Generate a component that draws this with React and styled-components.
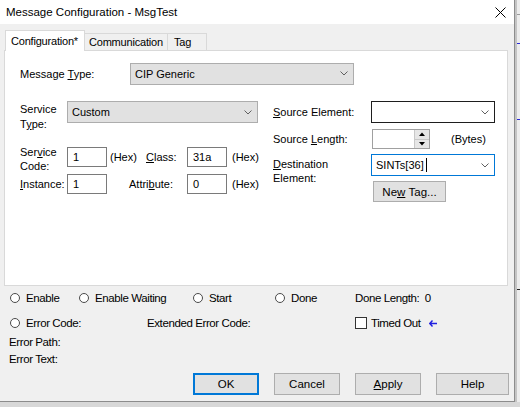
import React from 'react'
import styled, { createGlobalStyle } from 'styled-components'

const GlobalStyle = createGlobalStyle`
    * { box-sizing: border-box; }
    html, body { margin: 0; padding: 0; background: #fff; }
    body {
        font-family: "Liberation Sans", Arial, sans-serif;
        font-size: 11px;
        color: #000;
    }
`

const Screen = styled.div`
    width: 520px;
    height: 407px;
    overflow: hidden;
    display: flex;
    flex-direction: column;
    background: #d4d4d4;
`

const TopArea = styled.div`
    display: flex;
    height: 402px;
`

const Dialog = styled.div`
    width: 515px;
    display: flex;
    flex-direction: column;
    background: #f0f0f0;
    border-right: 1px solid #8c8c8c;
    border-bottom: 1px solid #8c8c8c;
`

const BehindStrip = styled.div`
    flex: 1;
    border-left: 2px solid #c4c4c4;
    background:
        linear-gradient(to bottom, transparent 43px, #2a2ad8 43px, #2a2ad8 44px, transparent 44px),
        linear-gradient(to bottom, transparent 119px, #2a2ad8 119px, #2a2ad8 120px, transparent 120px),
        linear-gradient(to bottom, transparent 289px, #222 289px, #222 290px, transparent 290px),
        linear-gradient(to bottom, transparent 14px, #9a9a9a 14px, #9a9a9a 15px, transparent 15px),
        #ececec;
`

const BottomStrip = styled.div`
    flex: 1;
    background: #d8d8d8;
`

const TitleBar = styled.div`
    height: 24px;
    background: #fff;
    display: flex;
    align-items: center;
    justify-content: space-between;
    padding-left: 6px;
    font-size: 11.5px;
`

const CloseButton = styled.div`
    width: 28px;
    height: 24px;
    display: flex;
    align-items: center;
    justify-content: center;
`

const Body = styled.div`
    flex: 1;
    padding: 7px 6px 0 4px;
    display: flex;
    flex-direction: column;
`

const Tabs = styled.div`
    display: flex;
    align-items: flex-end;
    height: 20px;
    padding-left: 1px;
    margin-bottom: -1px;
    position: relative;
    z-index: 1;
`

const Tab = styled.div`
    width: ${p => p.$w}px;
    height: ${p => (p.$active ? 21 : 18)}px;
    margin-left: ${p => (p.$first ? 0 : -1)}px;
    border: 1px solid #d9d9d9;
    border-bottom: ${p => (p.$active ? 'none' : '1px solid #d9d9d9')};
    background: ${p => (p.$active ? '#fff' : '#f0f0f0')};
    display: flex;
    align-items: center;
    padding-left: ${p => p.$pl}px;
    padding-bottom: ${p => (p.$active ? 1 : 0)}px;
    letter-spacing: -0.2px;
    white-space: nowrap;
`

const Panel = styled.div`
    width: 504px;
    height: 236px;
    border: 1px solid #d9d9d9;
    background: #fff;
    padding: 12px 0 0 15px;
`

const Row = styled.div`
    display: flex;
    align-items: center;
    height: ${p => p.$h || 20}px;
    margin-top: ${p => p.$mt || 0}px;
    margin-left: ${p => p.$ml || 0}px;
`

const Label = styled.span`
    width: ${p => (p.$w ? `${p.$w}px` : 'auto')};
    margin-left: ${p => p.$ml || 0}px;
    flex-shrink: 0;
    white-space: nowrap;
`

const TwoLineLabel = styled.div`
    width: ${p => p.$w}px;
    align-self: flex-start;
    margin-top: ${p => p.$mt || 0}px;
    line-height: ${p => p.$lh || 14}px;
    flex-shrink: 0;
`

const Combo = styled.div`
    width: ${p => p.$w}px;
    height: 22px;
    display: flex;
    align-items: center;
    justify-content: space-between;
    padding: 0 5px 0 4px;
    background: ${p => (p.$variant === 'disabled' ? '#e1e1e1' : '#fff')};
    border: 1px solid ${p =>
        p.$variant === 'disabled' ? '#adadad' : p.$variant === 'focus' ? '#0078d7' : '#1e1e1e'};
    flex-shrink: 0;
`

const Columns = styled.div`
    display: flex;
    margin-top: 17px;
`

const Column = styled.div`
    width: ${p => p.$w}px;
    margin-right: ${p => p.$mr || 0}px;
    display: flex;
    flex-direction: column;
`

const TextBox = styled.div`
    width: ${p => p.$w || 40}px;
    height: 20px;
    border: 1px solid #7a7a7a;
    background: #fff;
    padding-left: 5px;
    display: flex;
    align-items: center;
    flex-shrink: 0;
`

const SpinBox = styled.div`
    width: 58px;
    height: 20px;
    border: 1px solid #a0a0a0;
    background: #fff;
    display: flex;
    justify-content: flex-end;
    flex-shrink: 0;
`

const SpinButtons = styled.div`
    width: 15px;
    display: flex;
    flex-direction: column;
    border-left: 1px solid #c8c8c8;
`

const SpinButton = styled.div`
    flex: 1;
    background: #e6e6e6;
    display: flex;
    align-items: center;
    justify-content: center;
    border-bottom: ${p => (p.$top ? '1px solid #c8c8c8' : 'none')};
`

const Caret = styled.span`
    width: 1px;
    height: 14px;
    background: #000;
    margin-left: 2px;
`

const Button = styled.div`
    width: ${p => p.$w}px;
    height: ${p => p.$h || 22}px;
    margin-left: ${p => p.$ml || 0}px;
    margin-top: ${p => p.$mt || 0}px;
    background: #e1e1e1;
    border: ${p => (p.$default ? '2px solid #0078d7' : '1px solid #adadad')};
    display: flex;
    align-items: center;
    justify-content: center;
    flex-shrink: 0;
    font-size: 11.5px;
`

const StatusRow = styled.div`
    display: flex;
    align-items: center;
    height: 16px;
    margin-top: ${p => p.$mt || 0}px;
    margin-left: ${p => p.$ml || 6}px;
    font-size: 11.5px;
    letter-spacing: -0.4px;
`

const RadioItem = styled.div`
    width: ${p => (p.$w ? `${p.$w}px` : 'auto')};
    display: flex;
    align-items: center;
    gap: 6px;
    flex-shrink: 0;
`

const Radio = styled.span`
    width: 10px;
    height: 10px;
    border-radius: 50%;
    border: 1px solid #4a4a4a;
    background: #fff;
    flex-shrink: 0;
`

const CheckBox = styled.span`
    width: 12px;
    height: 12px;
    border: 1px solid #333;
    background: #fff;
    margin-right: 4px;
    flex-shrink: 0;
`

const ButtonBar = styled.div`
    display: flex;
    margin-top: 6px;
    margin-left: 189px;
    gap: 15px;
`

const Chevron = () => (
    <svg width="8" height="5" viewBox="0 0 8 5">
        <path d="M0.5 0.5 L4 4 L7.5 0.5" fill="none" stroke="#606060" strokeWidth="1" />
    </svg>
)

const Triangle = ({ up }) => (
    <svg width="6" height="4" viewBox="0 0 6 4">
        <path d={up ? 'M0 4 L3 0.5 L6 4 Z' : 'M0 0 L3 3.5 L6 0 Z'} fill="#000" />
    </svg>
)

const BackArrow = () => (
    <svg width="8" height="7" viewBox="0 0 8 7" style={{ marginLeft: 8 }}>
        <path d="M3.5 0.5 L0.8 3.5 L3.5 6.5 M1 3.5 L8 3.5" fill="none" stroke="#2020e0" strokeWidth="1.4" />
    </svg>
)

const App = () => {
    return (
        <Screen>
            <GlobalStyle />
            <TopArea>
                <Dialog>
                    <TitleBar>
                        <span>Message Configuration - MsgTest</span>
                        <CloseButton>
                            <svg width="11" height="11" viewBox="0 0 11 11">
                                <path d="M0.5 0.5 L10.5 10.5 M10.5 0.5 L0.5 10.5" stroke="#000" strokeWidth="1" />
                            </svg>
                        </CloseButton>
                    </TitleBar>
                    <Body>
                        <Tabs>
                            <Tab $active $first $w={80} $pl={5}>Configuration*</Tab>
                            <Tab $w={84} $pl={4}>Communication</Tab>
                            <Tab $w={40} $pl={6}>Tag</Tab>
                        </Tabs>
                        <Panel>
                            <Row $h={21}>
                                <Label $w={110}>Message <u>T</u>ype:</Label>
                                <Combo $w={224} $variant="disabled">
                                    <span>CIP Generic</span>
                                    <Chevron />
                                </Combo>
                            </Row>
                            <Columns>
                                <Column $w={238} $mr={15}>
                                    <Row $h={22}>
                                        <TwoLineLabel $w={47} $mt={1} $lh={15}>
                                            Service<br />T<u>y</u>pe:
                                        </TwoLineLabel>
                                        <Combo $w={191} $variant="disabled">
                                            <span>Custom</span>
                                            <Chevron />
                                        </Combo>
                                    </Row>
                                    <Row $mt={24}>
                                        <TwoLineLabel $w={47} $mt={-2}>
                                            Ser<u>v</u>ice<br />Code:
                                        </TwoLineLabel>
                                        <TextBox>1</TextBox>
                                        <Label $w={36} $ml={3}>(Hex)</Label>
                                        <Label $w={41}><u>C</u>lass:</Label>
                                        <TextBox>31a</TextBox>
                                        <Label $ml={5}>(Hex)</Label>
                                    </Row>
                                    <Row $mt={7}>
                                        <Label $w={47}><u>I</u>nstance:</Label>
                                        <TextBox>1</TextBox>
                                        <Label $w={58} $ml={22}>Attri<u>b</u>ute:</Label>
                                        <TextBox>0</TextBox>
                                        <Label $ml={5}>(Hex)</Label>
                                    </Row>
                                </Column>
                                <Column $w={222}>
                                    <Row $h={22}>
                                        <Label $w={98}><u>S</u>ource Element:</Label>
                                        <Combo $w={124}>
                                            <span />
                                            <Chevron />
                                        </Combo>
                                    </Row>
                                    <Row $mt={6}>
                                        <Label $w={99}>Source <u>L</u>ength:</Label>
                                        <SpinBox>
                                            <SpinButtons>
                                                <SpinButton $top><Triangle up /></SpinButton>
                                                <SpinButton><Triangle /></SpinButton>
                                            </SpinButtons>
                                        </SpinBox>
                                        <Label $ml={21}>(Bytes)</Label>
                                    </Row>
                                    <Row $h={22} $mt={5}>
                                        <TwoLineLabel $w={98} $mt={3} $lh={14}>
                                            <u>D</u>estination<br />Element:
                                        </TwoLineLabel>
                                        <Combo $w={124} $variant="focus">
                                            <span style={{ display: 'flex', alignItems: 'center' }}>
                                                SINTs[36]<Caret />
                                            </span>
                                            <Chevron />
                                        </Combo>
                                    </Row>
                                    <Button $w={73} $h={21} $ml={100} $mt={5}>
                                        Ne<u>w</u>&nbsp;Tag...
                                    </Button>
                                </Column>
                            </Columns>
                        </Panel>
                        <StatusRow $mt={4}>
                            <RadioItem $w={69}><Radio />Enable</RadioItem>
                            <RadioItem $w={114}><Radio />Enable Waiting</RadioItem>
                            <RadioItem $w={82}><Radio />Start</RadioItem>
                            <RadioItem $w={80}><Radio />Done</RadioItem>
                            <span>Done Length:&nbsp; 0</span>
                        </StatusRow>
                        <StatusRow $mt={9}>
                            <RadioItem $w={137}><Radio />Error Code:</RadioItem>
                            <Label $w={208}>Extended Error Code:</Label>
                            <CheckBox />
                            <span>Timed Out</span>
                            <BackArrow />
                        </StatusRow>
                        <StatusRow $mt={3} $ml={5}>Error Path:</StatusRow>
                        <StatusRow $mt={1} $ml={5}>Error Text:</StatusRow>
                        <ButtonBar>
                            <Button $w={66} $default>OK</Button>
                            <Button $w={66}>Cancel</Button>
                            <Button $w={66}><u>A</u>pply</Button>
                            <Button $w={73}>Help</Button>
                        </ButtonBar>
                    </Body>
                </Dialog>
                <BehindStrip />
            </TopArea>
            <BottomStrip />
        </Screen>
    )
}

export default App
